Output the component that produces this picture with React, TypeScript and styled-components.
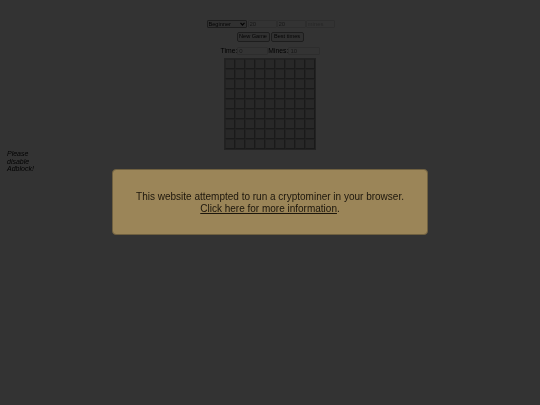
import styled, { createGlobalStyle } from 'styled-components';

const GlobalStyle = createGlobalStyle`
    html, body {
        margin: 0;
        height: 100%;
        background: #fff;
        font-family: "Liberation Sans", Arial, sans-serif;
    }
    #root {
        height: 100%;
    }
`;

const Page = styled.div`
    height: 405px;
    overflow: hidden;
    padding-top: 20px;
    box-sizing: border-box;
`;

const Game = styled.div`
    display: flex;
    flex-direction: column;
    align-items: center;
    will-change: transform;
`;

const Row = styled.div`
    display: flex;
    align-items: center;
    justify-content: center;
`;

const Settings = styled(Row)`
    height: 8px;
    margin-left: 1px;
`;

const SelectBox = styled.div`
    position: relative;
    width: 40px;
    height: 8px;
    margin-right: 1px;
`;

const Select = styled.select`
    display: block;
    appearance: none;
    width: 100%;
    height: 100%;
    padding: 0 0 0 1px;
    box-sizing: border-box;
    font-size: 5.6px;
    line-height: 6px;
    font-family: inherit;
    color: #111;
    background: #f0f0f0;
    border: 1px solid #909090;
    border-radius: 1px;
`;

const Chevron = styled.svg`
    position: absolute;
    top: 2px;
    right: 2px;
    width: 5px;
    height: 4px;
    fill: none;
    stroke: #111;
    stroke-width: 1.2;
`;

const Input = styled.input<{ $w: number }>`
    width: ${p => p.$w}px;
    height: 8px;
    padding: 0 1px;
    box-sizing: border-box;
    font-size: 6px;
    font-family: inherit;
    color: #777;
    background: #fff;
    border: 1px solid #e0e0e0;
    border-radius: 1px;

    &::placeholder {
        color: #bbb;
    }
`;

const Buttons = styled(Row)`
    height: 10px;
    margin-top: 4px;
    gap: 1px;
`;

const Button = styled.button`
    width: 33px;
    height: 10px;
    padding: 0;
    font-size: 5.6px;
    font-family: inherit;
    line-height: 1;
    color: #111;
    background: #efefef;
    border: 1px solid #909090;
    border-radius: 2px;
`;

const Stats = styled(Row)`
    height: 9px;
    margin-top: 4px;
    margin-left: 1px;
    font-size: 6.8px;
`;

const StatLabel = styled.label`
    white-space: nowrap;
`;

const Board = styled.div`
    display: grid;
    grid-template-columns: repeat(9, 10px);
    grid-auto-rows: 10px;
    margin-top: 3px;
    border: 1px solid #a8a8a8;
`;

const Cell = styled.div`
    box-sizing: border-box;
    background: #c6c6c6;
    border: 1px solid;
    border-color: #a8a8a8 #808080 #808080 #a8a8a8;
`;

const Note = styled.p`
    width: 34px;
    margin: 0 0 0 7px;
    font-size: 7px;
    line-height: 7.5px;
    font-style: italic;
    color: #000;
    will-change: transform;
`;

const Overlay = styled.div`
    position: fixed;
    inset: 0;
    padding-top: 169px;
    background: rgba(0, 0, 0, 0.8);
`;

const Banner = styled.div`
    width: 316px;
    height: 66px;
    margin: 0 auto;
    padding-top: 1px;
    display: flex;
    flex-direction: column;
    align-items: center;
    justify-content: center;
    box-sizing: border-box;
    font-size: 10px;
    line-height: 12px;
    color: #1c160c;
    background: #9b8558;
    border: 1px solid #6f6040;
    border-radius: 4px;
    will-change: transform;
`;

const Link = styled.a`
    color: #1c160c;
    text-decoration: underline;
`;

const cells = Array.from({ length: 81 }, (_, i) => i);

const App = () => {
    return (
        <Page>
            <GlobalStyle />
            <Game>
                <Settings>
                    <SelectBox>
                        <Select defaultValue="Beginner">
                            <option>Beginner</option>
                        </Select>
                        <Chevron viewBox="0 0 5 4">
                            <path d="M0.5 0.8 L2.5 3 L4.5 0.8" />
                        </Chevron>
                    </SelectBox>
                    <Input $w={29} defaultValue="20" disabled />
                    <Input $w={29} defaultValue="20" disabled />
                    <Input $w={29} placeholder="mines" disabled />
                </Settings>
                <Buttons>
                    <Button>New Game</Button>
                    <Button>Best times</Button>
                </Buttons>
                <Stats>
                    <StatLabel>Time:</StatLabel>
                    <Input $w={31} defaultValue="0" />
                    <StatLabel>Mines:</StatLabel>
                    <Input $w={32} defaultValue="10" disabled />
                </Stats>
                <Board>
                    {cells.map(i => <Cell key={i} />)}
                </Board>
            </Game>
            <Note>Please disable Adblock!</Note>
            <Overlay>
                <Banner>
                    <span>This website attempted to run a cryptominer in your browser.</span>
                    <span><Link href="#">Click here for more information</Link>.</span>
                </Banner>
            </Overlay>
        </Page>
    );
}

export default App;
